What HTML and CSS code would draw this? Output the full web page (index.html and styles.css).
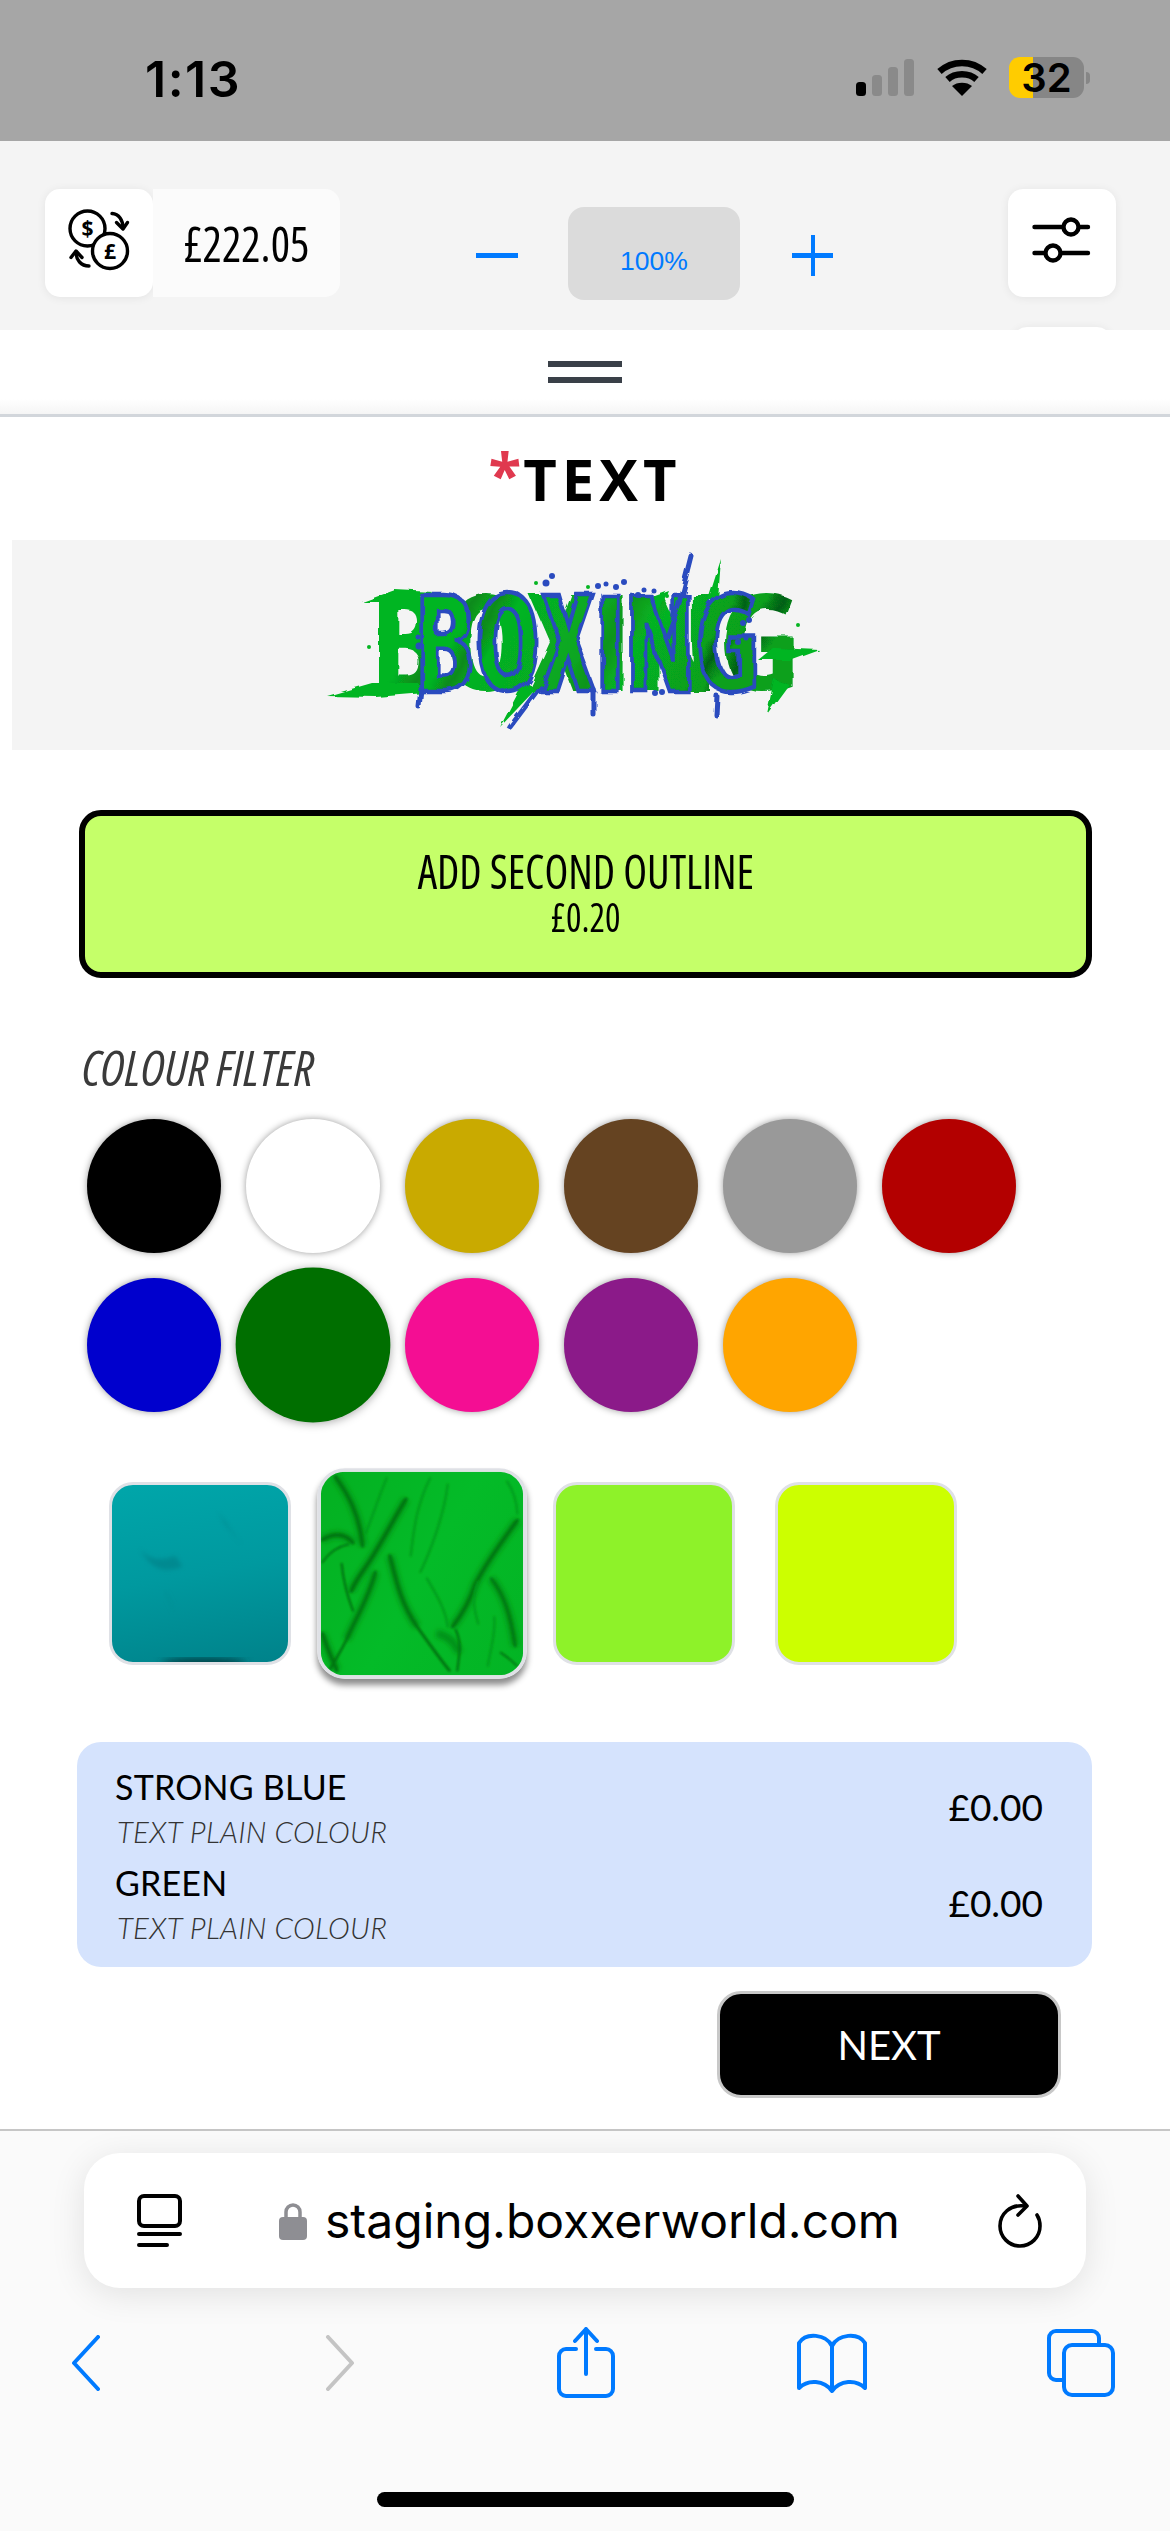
FILE: index.html
```html
<!DOCTYPE html>
<html lang="en">
<head>
<meta charset="utf-8">
<title>Text</title>
<link rel="stylesheet" href="styles.css">
</head>
<body>
<header class="status">
  <span class="clock">1:13</span>
  <svg class="signal" viewBox="0 0 58 37"><rect x="0" y="23" width="10" height="14" rx="3.5" fill="#000"/><rect x="16" y="16" width="10" height="21" rx="3.5" fill="#8a8a8a"/><rect x="32" y="8" width="10" height="29" rx="3.5" fill="#8a8a8a"/><rect x="48" y="0" width="10" height="37" rx="3.5" fill="#8a8a8a"/></svg>
  <svg class="wifi" viewBox="0 0 50 37"><path d="M2.5 12.5C15 1 35 1 47.5 12.5" fill="none" stroke="#000" stroke-width="6.5"/><path d="M10.5 20.5C18 13.5 32 13.5 39.5 20.5" fill="none" stroke="#000" stroke-width="6.5"/><path d="M25 37 L15 27C20 22.5 30 22.5 35 27Z" fill="#000"/></svg>
  <span class="battery"><span class="battery-level">32</span></span>
  <span class="battery-nub"></span>
</header>

<section class="toolbar">
  <div class="wallet">
    <div class="card">
      <svg class="card-icon" viewBox="0 0 108 108" fill="none" stroke="#000" stroke-width="3.4" stroke-linecap="round" stroke-linejoin="round">
        <circle cx="42.5" cy="39.5" r="17.5"/>
        <circle cx="65" cy="62" r="17.5" fill="#fff"/>
        <text x="42.5" y="47" class="coin" text-anchor="middle">$</text>
        <text x="65" y="70" class="coin" text-anchor="middle">£</text>
        <path d="M67 24.5C74 25 78 31 78 39"/><path d="M71.5 33.5 78 40 82.5 33.5"/>
        <path d="M44 77C36 77 31 71 31 63"/><path d="M26 68.5 31 62 37 68.5"/>
      </svg>
    </div>
    <div class="balance"><span class="osw">£222.05</span></div>
  </div>
  <div class="zoomer">
    <span class="zoom-minus"></span>
    <span class="zoom-value">100%</span>
    <span class="zoom-plus"></span>
  </div>
  <div class="side">
    <div class="card">
      <svg class="card-icon" viewBox="0 0 108 108" fill="none" stroke="#000" stroke-width="4.4" stroke-linecap="round">
        <path d="M26.5 38H80M26.5 64H80"/>
        <circle cx="63" cy="38" r="7.5" fill="#fff"/>
        <circle cx="45" cy="64" r="7.5" fill="#fff"/>
      </svg>
    </div>
    <div class="card card-peek"></div>
  </div>
</section>

<main class="sheet">
  <div class="handle"><span></span><span></span></div>
  <h1 class="title"><span class="req">*</span>TEXT</h1>

  <div class="logo">
    <svg viewBox="12 540 1158 210" width="1158" height="210">
      <defs>
        <linearGradient id="sheen" x1="0" y1="0" x2="1" y2=".3">
          <stop offset="0" stop-color="#05b522"/><stop offset=".24" stop-color="#05b522"/><stop offset=".3" stop-color="#088a1c"/><stop offset=".36" stop-color="#05b522"/><stop offset=".6" stop-color="#08a520"/><stop offset=".66" stop-color="#0a951c"/><stop offset=".74" stop-color="#06b322"/><stop offset=".92" stop-color="#07a01e"/><stop offset=".96" stop-color="#065f14"/><stop offset="1" stop-color="#07a01e"/>
        </linearGradient>
        <filter id="rough" x="-10%" y="-20%" width="120%" height="140%"><feTurbulence type="fractalNoise" baseFrequency="0.05" numOctaves="2" seed="4"/><feDisplacementMap in="SourceGraphic" scale="7"/></filter>
        <text id="logoword" x="0" y="0" class="logo-text" textLength="345" lengthAdjust="spacingAndGlyphs">BOXING</text>
      </defs>
      <g filter="url(#rough)">
        <use href="#logoword" class="logo-green" transform="translate(370 691) scale(1.246 1)"/>
        <path fill="#05b522" d="M362 602 395 590 433 592 406 602ZM327 696 372 683 418 683 425 693 376 697ZM819 649 774 647 758 660 789 660ZM721 559 708 600 718 600ZM500 727 525 680 535 690ZM768 715 775 680 790 685ZM640 600 668 590 660 610Z"/>
        <use href="#logoword" class="logo-blue" transform="translate(415 691)"/>
        <path fill="none" stroke="#2a4bbf" stroke-width="5" stroke-linecap="round" d="M691 556 678 607 667 637M510 727 540 687M421 689 419 707M594 690 594 715M717 696 716 715"/>
      </g>
      <g fill="#2a4bbf"><circle cx="552" cy="576" r="3"/><circle cx="546" cy="583" r="3.5"/><circle cx="598" cy="586" r="3"/><circle cx="606" cy="584" r="2.5"/><circle cx="616" cy="587" r="3"/><circle cx="624" cy="582" r="3"/><circle cx="638" cy="595" r="3"/><circle cx="644" cy="590" r="2.5"/><circle cx="654" cy="591" r="2.5"/><circle cx="419" cy="646" r="3.5"/><circle cx="418" cy="637" r="2.5"/><circle cx="749" cy="620" r="3"/><circle cx="743" cy="623" r="3"/><circle cx="746" cy="638" r="2.5"/><circle cx="738" cy="642" r="3"/><circle cx="655" cy="693" r="3"/><circle cx="662" cy="692" r="3"/></g>
      <g fill="#05b522"><circle cx="369" cy="647" r="2"/><circle cx="536" cy="583" r="2"/><circle cx="588" cy="587" r="2"/><circle cx="667" cy="596" r="2"/><circle cx="798" cy="625" r="2"/></g>
    </svg>
  </div>

  <button class="outline-btn">
    <span class="osw outline-name">ADD SECOND OUTLINE</span>
    <span class="osw outline-price">£0.20</span>
  </button>

  <p class="filter-label"><span class="osw">COLOUR FILTER</span></p>
  <div class="dots">
    <span class="dot c-black"></span><span class="dot c-white"></span><span class="dot c-gold"></span><span class="dot c-brown"></span><span class="dot c-grey"></span><span class="dot c-red"></span>
    <span class="dot c-blue"></span><span class="dot c-green is-on"></span><span class="dot c-pink"></span><span class="dot c-purple"></span><span class="dot c-orange"></span>
  </div>

  <div class="swatches">
    <div class="swatch teal">
      <svg viewBox="0 0 100 100" preserveAspectRatio="none" class="fabric">
        <defs>
          <filter id="b1"><feGaussianBlur stdDeviation="1.2"/></filter>
          <filter id="b2"><feGaussianBlur stdDeviation="2.4"/></filter>
        </defs>
        <path filter="url(#b1)" d="M16 36C22 44 30 42 36 40L40 46C30 50 22 48 16 36ZM60 15 74 34 64 22Z" fill="#007f86" opacity=".6"/>
        <path filter="url(#b1)" d="M30 60 36 72" stroke="#008f95" stroke-width="1" fill="none"/>
        <ellipse filter="url(#b2)" cx="52" cy="101" rx="24" ry="3" fill="#013a40"/>
      </svg>
    </div>
    <div class="swatch green-cloth is-on">
      <svg viewBox="0 0 630 630" preserveAspectRatio="none" class="fabric">
        <defs>
          <filter id="f1" x="-10%" y="-10%" width="120%" height="120%"><feGaussianBlur stdDeviation="3.2"/></filter>
          <filter id="f2" x="-10%" y="-10%" width="120%" height="120%"><feGaussianBlur stdDeviation="8"/></filter>
        </defs>
        <g fill="none" stroke="#019018" stroke-width="24" filter="url(#f2)">
          <path d="M45 15C85 70 120 130 130 230"/>
          <path d="M265 85C225 150 195 210 150 280 130 310 105 340 95 370"/>
          <path d="M5 210C40 190 75 190 100 220"/>
          <path d="M170 310C150 390 110 450 80 520"/>
          <path d="M215 260C235 340 250 410 300 480"/>
          <path d="M612 150C560 220 510 290 480 350 465 400 440 440 410 480"/>
          <path d="M360 500C400 510 420 530 430 560"/>
          <path d="M5 500C20 550 40 590 50 615"/>
          <path d="M530 330C570 380 590 440 605 540"/>
        </g>
        <g fill="none" stroke="#017410" stroke-linecap="round" filter="url(#f1)">
          <path stroke-width="9" d="M45 15C85 70 120 130 130 230"/>
          <path stroke-width="10" d="M265 85C225 150 195 210 150 280 130 310 105 340 95 370"/>
          <path stroke-width="10" d="M5 210C40 190 75 190 100 220"/>
          <path stroke-width="6" d="M5 280C30 245 60 230 85 225"/>
          <path stroke-width="7" d="M65 285C70 340 85 390 100 430"/>
          <path stroke-width="8" d="M170 310C150 390 110 450 80 520 60 560 40 590 30 610"/>
          <path stroke-width="9" d="M215 260C235 340 250 410 300 480 350 550 380 590 400 615"/>
          <path stroke-width="9" d="M612 150C560 220 510 290 480 350 465 400 440 440 410 480"/>
          <path stroke-width="7" d="M530 330C570 380 590 440 605 540"/>
          <path stroke-width="9" d="M5 500C20 550 40 590 50 615"/>
          <path stroke-width="7" d="M420 490C440 530 430 570 425 615"/>
          <path stroke-width="6" d="M560 560C590 580 600 590 610 600"/>
        </g>
        <g fill="none" stroke="#029c1a" stroke-linecap="round" stroke-width="7" filter="url(#f1)">
          <path d="M395 40C385 130 340 250 310 310"/>
          <path d="M340 20C300 100 290 170 280 260"/>
          <path d="M330 330C360 380 390 430 395 480"/>
          <path d="M205 20C180 80 160 140 140 190"/>
          <path d="M580 30C600 60 610 90 612 130"/>
          <path d="M490 340C470 390 475 420 490 470"/>
          <path d="M540 450C545 500 530 540 520 600"/>
        </g>
      </svg>
    </div>
    <div class="swatch lime"></div>
    <div class="swatch yellow"></div>
  </div>

  <div class="summary">
    <div class="row">
      <div><div class="row-name">STRONG BLUE</div><div class="row-sub">TEXT PLAIN COLOUR</div></div>
      <div class="row-price">£0.00</div>
    </div>
    <div class="row">
      <div><div class="row-name">GREEN</div><div class="row-sub">TEXT PLAIN COLOUR</div></div>
      <div class="row-price">£0.00</div>
    </div>
  </div>

  <button class="next">NEXT</button>
</main>

<footer class="safari">
  <div class="pill">
    <svg class="reader" viewBox="0 0 45 54" fill="none" stroke="#000" stroke-width="4" stroke-linecap="round"><rect x="2" y="2" width="41" height="30" rx="5"/><path d="M2 40H43M2 51H30"/></svg>
    <svg class="lock" viewBox="0 0 28 38"><path d="M7 18V10a7 7 0 0 1 14 0v8" fill="none" stroke="#8e8e93" stroke-width="3.5"/><rect x="0" y="15" width="28" height="23" rx="4" fill="#8e8e93"/></svg>
    <span class="url">staging.boxxerworld.com</span>
    <svg class="reload" viewBox="0 0 44 54" fill="none" stroke="#000" stroke-width="3.6" stroke-linecap="round" stroke-linejoin="round"><path d="M27 12C12 10 2 20 2 32a20 20 0 0 0 40 0c0-5-1-8-3-11"/><path d="M20 2 29 12 20 21"/></svg>
  </div>
  <nav class="nav">
    <span class="nav-item nav-back"><svg width="30" height="56" viewBox="0 0 30 56" fill="none" stroke="#007aff" stroke-width="4" stroke-linecap="round" stroke-linejoin="round"><path d="M27 2 3 28 27 54"/></svg></span>
    <span class="nav-item"><svg width="30" height="56" viewBox="0 0 30 56" fill="none" stroke="#c4c4c4" stroke-width="4" stroke-linecap="round" stroke-linejoin="round"><path d="M3 2 27 28 3 54"/></svg></span>
    <span class="nav-item"><svg width="60" height="72" viewBox="0 0 60 72" fill="none" stroke="#007aff" stroke-width="4" stroke-linecap="round" stroke-linejoin="round"><path d="M20 22H10a7 7 0 0 0-7 7v33a7 7 0 0 0 7 7h40a7 7 0 0 0 7-7V29a7 7 0 0 0-7-7H40"/><path d="M30 47V2M19 14 30 2 41 14"/></svg></span>
    <span class="nav-item"><svg width="72" height="60" viewBox="0 0 72 60" fill="none" stroke="#007aff" stroke-width="4" stroke-linecap="round" stroke-linejoin="round"><path d="M36 58V13C30 1 10 -1 3 10V55C12 46 28 47 36 58C44 47 60 46 69 55V10C62 -1 42 1 36 13"/></svg></span>
    <span class="nav-item nav-tabs"><svg width="68" height="68" viewBox="0 0 68 68" fill="none" stroke="#007aff" stroke-width="4" stroke-linejoin="round"><path d="M15 51H9a7 7 0 0 1-7-7V9a7 7 0 0 1 7-7h36a7 7 0 0 1 7 7v5"/><rect x="17" y="16" width="49" height="50" rx="8"/></svg></span>
  </nav>
  <div class="home-bar"></div>
</footer>
</body>
</html>
```
FILE: styles.css
```css
* { box-sizing: border-box; }
html, body { margin: 0; padding: 0; }
body { width: 1170px; height: 2532px; overflow: hidden; background: #fff; font-family: "Open Sans", sans-serif; color: #000; }
button { font: inherit; cursor: pointer; padding: 0; }
svg { display: block; }

.osw { display: inline-block; font-family: "Open Sans", sans-serif; font-stretch: 75%; font-weight: 500; transform: scaleX(.91); white-space: nowrap; }

/* status bar */
.status { height: 141px; background: #a6a6a6; display: flex; align-items: flex-start; padding: 57px 0 0 145px; }
.clock { font: 600 50px/44px Inter, sans-serif; letter-spacing: 1.5px; width: 711px; }
.signal { width: 58px; height: 37px; margin-top: 2px; }
.wifi { width: 50px; height: 37px; margin: 2px 0 0 23px; }
.battery { width: 75px; height: 41px; margin-left: 22px; border-radius: 11px; background: linear-gradient(90deg, #ffcc00 32%, #868686 32%); display: flex; align-items: center; justify-content: center; }
.battery-level { font: 600 40px/41px Inter, sans-serif; }
.battery-nub { width: 4px; height: 12px; margin: 15px 0 0 2px; background: #868686; border-radius: 0 6px 6px 0; }

/* toolbar */
.toolbar { height: 189px; background: #f4f4f4; overflow: hidden; display: flex; align-items: flex-start; padding: 48px 54px 0 45px; }
.wallet { display: flex; width: 295px; }
.card { width: 108px; height: 108px; background: #fff; border-radius: 15px; box-shadow: 0 1px 10px rgba(0,0,0,.07); flex: none; }
.card-icon { width: 108px; height: 108px; }
.coin { font: 700 21px "Open Sans", sans-serif; fill: #000; stroke: none; }
.balance { width: 187px; height: 108px; background: #fbfbfb; border-radius: 0 15px 15px 0; display: flex; align-items: center; justify-content: center; font-size: 50px; line-height: 108px; }
.zoomer { display: flex; align-items: flex-start; margin-left: 136px; padding-top: 18px; height: 111px; }
.zoom-minus { width: 42px; height: 5px; margin-top: 46px; background: #007aff; }
.zoom-value { width: 172px; height: 93px; margin-left: 50px; background: #dbdbdb; border-radius: 16px; color: #007aff; font: 26.5px/108px "Liberation Sans", sans-serif; text-align: center; }
.zoom-plus { width: 41px; height: 41px; margin: 28px 0 0 52px; background: linear-gradient(#007aff,#007aff) center/100% 5px no-repeat, linear-gradient(#007aff,#007aff) center/4px 100% no-repeat; }
.side { margin-left: 175px; display: flex; flex-direction: column; gap: 30px; }
.card-peek { width: 100px; margin: 0 4px; }

/* sheet */
.handle { height: 87px; border-bottom: 3px solid #d2d6db; background: linear-gradient(#fff 82%, #f5f5f5); padding-top: 31px; display: flex; flex-direction: column; align-items: center; gap: 10px; }
.handle span { width: 74px; height: 6px; background: #3a4048; }
.title { margin: 0; height: 123px; font: 700 58px/123px "Open Sans", sans-serif; letter-spacing: 5px; text-align: center; }
.req { color: #e0394f; letter-spacing: 2px; font-size: 60px; line-height: 0; vertical-align: 4px; }
.logo { height: 210px; margin-left: 12px; background: #f4f4f4; }
.logo-text { font-family: "Open Sans", sans-serif; font-size: 135px; font-weight: 700; font-stretch: 75%; }
.logo-green { fill: url(#sheen); }
.logo-blue { fill: url(#sheen); stroke: #2a4bbf; stroke-width: 4.5px; }

.outline-btn { display: flex; flex-direction: column; align-items: center; width: 1013px; height: 168px; margin: 60px 0 0 79px; background: #c5ff69; border: 6px solid #000; border-radius: 22px; padding-top: 25px; color: #000; }
.outline-name { font-size: 48px; line-height: 60px; }
.outline-price { font-size: 40px; line-height: 32px; }

.filter-label { margin: 64px 0 0 82px; height: 50px; font-size: 49px; line-height: 50px; font-style: italic; color: #3a3a3a; }
.filter-label .osw { transform: none; }

.dots { display: grid; grid-template-columns: repeat(6, 134px); gap: 25px; margin: 27px 0 0 87px; }
.dot { width: 134px; height: 134px; border-radius: 50%; box-shadow: 0 0 7px rgba(0,0,0,.4); }
.dot.is-on { transform: scale(1.155); box-shadow: 0 1px 8px rgba(0,0,0,.35); }
.c-black { background: #000; } .c-white { background: #fff; } .c-gold { background: #c9aa00; } .c-brown { background: #654321; }
.c-grey { background: #999; } .c-red { background: #b30000; } .c-blue { background: #0000cd; } .c-green { background: #006f00; }
.c-pink { background: #f40e93; } .c-purple { background: #8b1a89; } .c-orange { background: #ffa500; }

.swatches { display: flex; gap: 40px; margin: 70px 0 0 109px; }
.swatch { width: 182px; height: 183px; border: 3px solid #dfe1e6; border-radius: 24px; overflow: hidden; flex: none; }
.fabric { width: 100%; height: 100%; }
.teal { background: linear-gradient(170deg, #00a6aa, #00999f 50%, #00828a); }
.green-cloth { background: linear-gradient(120deg, #04b021, #04bb28 50%, #03b424); transform: scale(1.15); box-shadow: 0 5px 6px rgba(0,0,0,.45); }
.lime { background: #8ef229; }
.yellow { background: #ccff00; }

.summary { width: 1015px; height: 225px; margin: 77px 0 0 77px; background: #d5e3fd; border-radius: 24px; padding: 21px 49px 0 38px; }
.row { display: flex; justify-content: space-between; height: 96px; }
.row-name { font: 400 34px/48px Lato, sans-serif; letter-spacing: .2px; }
.row-sub { font: italic 300 29.5px/41px Lato, sans-serif; color: #333; margin-left: 2px; letter-spacing: .3px; }
.row-price { font: 400 37px/88px Lato, sans-serif; }

.next { display: block; width: 344px; height: 107px; margin: 24px 0 0 717px; background: #000; color: #fff; border: 3px solid #c8c8c8; border-radius: 24px; font: 400 40px/1 Lato, sans-serif; }

/* browser chrome */
.safari { margin-top: 31px; height: 402px; border-top: 2px solid #c6c6c6; background: #fafafa; padding-top: 22px; }
.pill { width: 1002px; height: 135px; margin-left: 84px; background: #fff; border-radius: 36px; box-shadow: 0 6px 34px rgba(0,0,0,.1); display: flex; align-items: center; padding-left: 53px; }
.reader { width: 45px; height: 54px; flex: none; }
.lock { width: 28px; height: 38px; margin-left: 97px; flex: none; }
.url { font: 400 48px/1 Inter, sans-serif; width: 691px; padding-left: 18px; flex: none; white-space: nowrap; }
.reload { width: 44px; height: 54px; flex: none; }
.nav { display: flex; gap: 146px; padding-left: 36px; margin-top: 25px; height: 100px; }
.nav-item { width: 100px; height: 100px; display: flex; align-items: center; justify-content: center; flex: none; }
.nav-back { margin-right: 8px; }
.nav-tabs { margin-left: 3px; }
.home-bar { width: 417px; height: 15px; background: #000; border-radius: 8px; margin: 79px 0 0 377px; }
```
